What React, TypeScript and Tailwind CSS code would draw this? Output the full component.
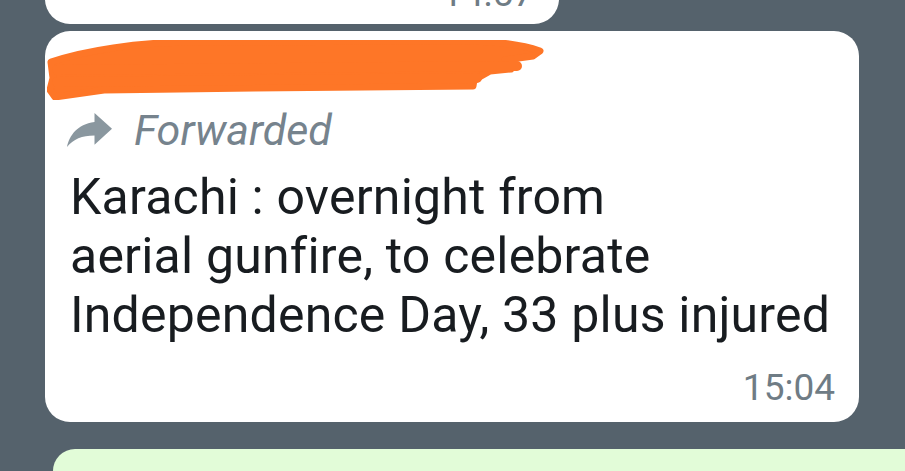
import React from 'react';

const ForwardIcon: React.FC = () => (
  <svg width="45" height="34" viewBox="3 5 18 15" preserveAspectRatio="none" className="shrink-0">
    <path d="M21,12L14,5V9C7,10 4,15 3,20C5.5,16.5 9,14.9 14,14.9V19L21,12Z" fill="#8a979f" />
  </svg>
);

// orange marker scribble hiding the sender name
const Scribble: React.FC = () => (
  <svg width="500" height="60" viewBox="0 0 500 60" className="block">
    <path
      d="M4,22 C40,10 90,3 138,2 L415,1 C450,1 475,5 493,11 L486,16 L458,20 L464,29 L443,31 L427,40 L426,46 L207,48 L57,50 L8,57 L3,50 L6,38 Z"
      fill="#fe7627"
      stroke="#fe7627"
      strokeWidth="7"
      strokeLinejoin="round"
    />
    <path d="M10,30 L470,26" stroke="#fe7627" strokeWidth="10" strokeLinecap="round" />
    <path d="M10,42 L430,38" stroke="#fe7627" strokeWidth="10" strokeLinecap="round" />
  </svg>
);

const App: React.FC = () => {
  return (
    <div className="w-[905px] h-[471px] overflow-hidden bg-[#55626c] font-['Roboto',sans-serif] flex flex-col">
      {/* previous message, cut off */}
      <div className="ml-[45px] w-[514px] h-[64px] -mt-[40px] shrink-0 bg-white rounded-b-[25px] flex items-end justify-end pr-[25px] pb-[10px]">
        <span className="text-[37px] leading-[40px] text-[#6f7c85]">14:57</span>
      </div>

      {/* forwarded message */}
      <div className="ml-[45px] mt-[7px] w-[814px] h-[391px] shrink-0 bg-white rounded-[25px] flex flex-col pt-[9px] pb-[14px]">
        <div className="pl-[2px]">
          <Scribble />
        </div>
        <div className="mt-[6px] h-[48px] flex items-center gap-[22px] pl-[22px]">
          <ForwardIcon />
          <span className="italic text-[43px] leading-[48px] text-[#76838d]">Forwarded</span>
        </div>
        <p className="mt-[14px] pl-[25px] text-[50px] leading-[59px] tracking-[0.2px] text-[#181c20]">
          Karachi : overnight from
          <br />
          aerial gunfire, to celebrate
          <br />
          Independence Day, 33 plus injured
        </p>
        <div className="mt-auto flex justify-end pr-[24px]">
          <span className="text-[37px] leading-[40px] text-[#6f7c85]">15:04</span>
        </div>
      </div>

      {/* next outgoing message, cut off */}
      <div className="ml-[53px] mt-[27px] flex-1 bg-[#e2fcd8] rounded-tl-[28px]" />
    </div>
  );
};

export default App;
